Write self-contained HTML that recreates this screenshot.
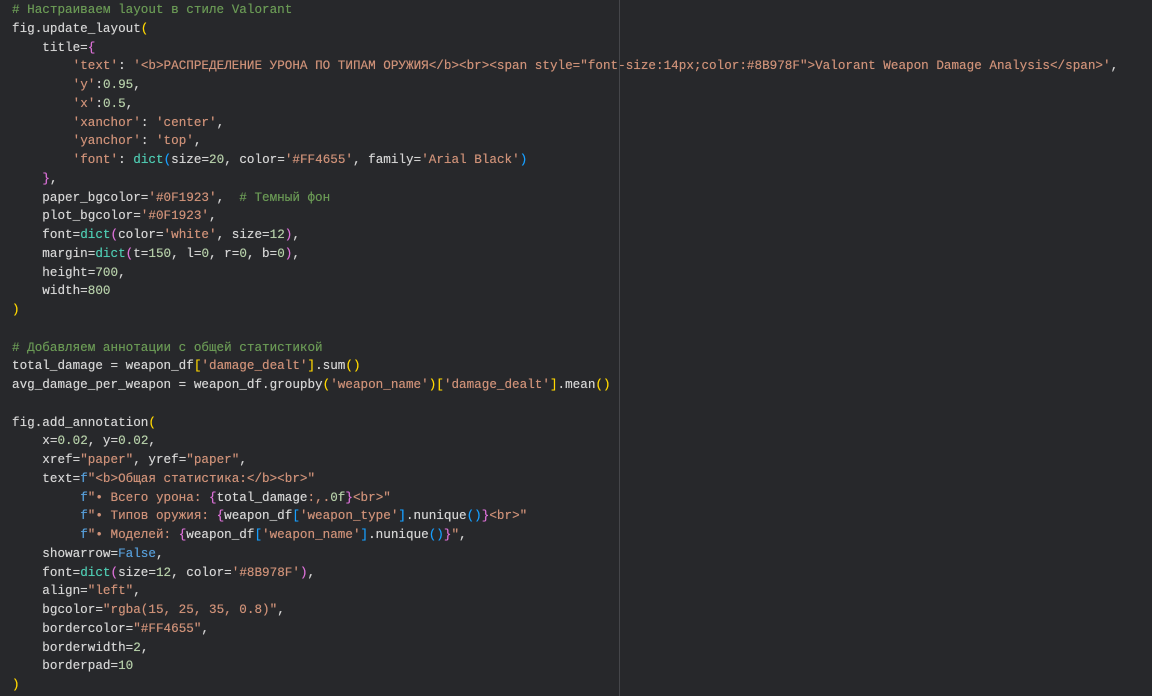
<!DOCTYPE html>
<html><head><meta charset="utf-8"><style>
html,body{margin:0;padding:0;background:#27282b;width:1152px;height:696px;overflow:hidden}
pre{margin:0;position:absolute;left:12px;top:1px;font-family:"Liberation Mono","DejaVu Sans Mono",monospace;font-size:12.63px;line-height:18.75px;color:#d4d4d4;white-space:pre;text-shadow:0 0 0.4px currentColor}
.rule{position:absolute;left:619px;top:0;width:1px;height:696px;background:#45464a}
.c{color:#6a9955}.s{color:#ce9178}.n{color:#b5cea8}.k{color:#569cd6}.f{color:#4ec9b0}
.y{color:#ffd700}.m{color:#da70d6}.b{color:#179fff}
</style></head><body>
<div class="rule"></div>
<pre><span class="c"># Настраиваем layout в стиле Valorant</span>
fig.update_layout<span class="y">(</span>
    title=<span class="m">{</span>
        <span class="s">'text'</span>: <span class="s">'&lt;b&gt;РАСПРЕДЕЛЕНИЕ УРОНА ПО ТИПАМ ОРУЖИЯ&lt;/b&gt;&lt;br&gt;&lt;span style="font-size:14px;color:#8B978F"&gt;Valorant Weapon Damage Analysis&lt;/span&gt;'</span>,
        <span class="s">'y'</span>:<span class="n">0.95</span>,
        <span class="s">'x'</span>:<span class="n">0.5</span>,
        <span class="s">'xanchor'</span>: <span class="s">'center'</span>,
        <span class="s">'yanchor'</span>: <span class="s">'top'</span>,
        <span class="s">'font'</span>: <span class="f">dict</span><span class="b">(</span>size=<span class="n">20</span>, color=<span class="s">'#FF4655'</span>, family=<span class="s">'Arial Black'</span><span class="b">)</span>
    <span class="m">}</span>,
    paper_bgcolor=<span class="s">'#0F1923'</span>,  <span class="c"># Темный фон</span>
    plot_bgcolor=<span class="s">'#0F1923'</span>,
    font=<span class="f">dict</span><span class="m">(</span>color=<span class="s">'white'</span>, size=<span class="n">12</span><span class="m">)</span>,
    margin=<span class="f">dict</span><span class="m">(</span>t=<span class="n">150</span>, l=<span class="n">0</span>, r=<span class="n">0</span>, b=<span class="n">0</span><span class="m">)</span>,
    height=<span class="n">700</span>,
    width=<span class="n">800</span>
<span class="y">)</span>

<span class="c"># Добавляем аннотации с общей статистикой</span>
total_damage = weapon_df<span class="y">[</span><span class="s">'damage_dealt'</span><span class="y">]</span>.sum<span class="y">()</span>
avg_damage_per_weapon = weapon_df.groupby<span class="y">(</span><span class="s">'weapon_name'</span><span class="y">)[</span><span class="s">'damage_dealt'</span><span class="y">]</span>.mean<span class="y">()</span>

fig.add_annotation<span class="y">(</span>
    x=<span class="n">0.02</span>, y=<span class="n">0.02</span>,
    xref=<span class="s">"paper"</span>, yref=<span class="s">"paper"</span>,
    text=<span class="k">f</span><span class="s">"&lt;b&gt;Общая статистика:&lt;/b&gt;&lt;br&gt;"</span>
         <span class="k">f</span><span class="s">"• Всего урона: </span><span class="m">{</span>total_damage<span class="s">:,.</span><span class="n">0f</span><span class="m">}</span><span class="s">&lt;br&gt;"</span>
         <span class="k">f</span><span class="s">"• Типов оружия: </span><span class="m">{</span>weapon_df<span class="b">[</span><span class="s">'weapon_type'</span><span class="b">]</span>.nunique<span class="b">()</span><span class="m">}</span><span class="s">&lt;br&gt;"</span>
         <span class="k">f</span><span class="s">"• Моделей: </span><span class="m">{</span>weapon_df<span class="b">[</span><span class="s">'weapon_name'</span><span class="b">]</span>.nunique<span class="b">()</span><span class="m">}</span><span class="s">"</span>,
    showarrow=<span class="k">False</span>,
    font=<span class="f">dict</span><span class="m">(</span>size=<span class="n">12</span>, color=<span class="s">'#8B978F'</span><span class="m">)</span>,
    align=<span class="s">"left"</span>,
    bgcolor=<span class="s">"rgba(15, 25, 35, 0.8)"</span>,
    bordercolor=<span class="s">"#FF4655"</span>,
    borderwidth=<span class="n">2</span>,
    borderpad=<span class="n">10</span>
<span class="y">)</span></pre>
</body></html>
